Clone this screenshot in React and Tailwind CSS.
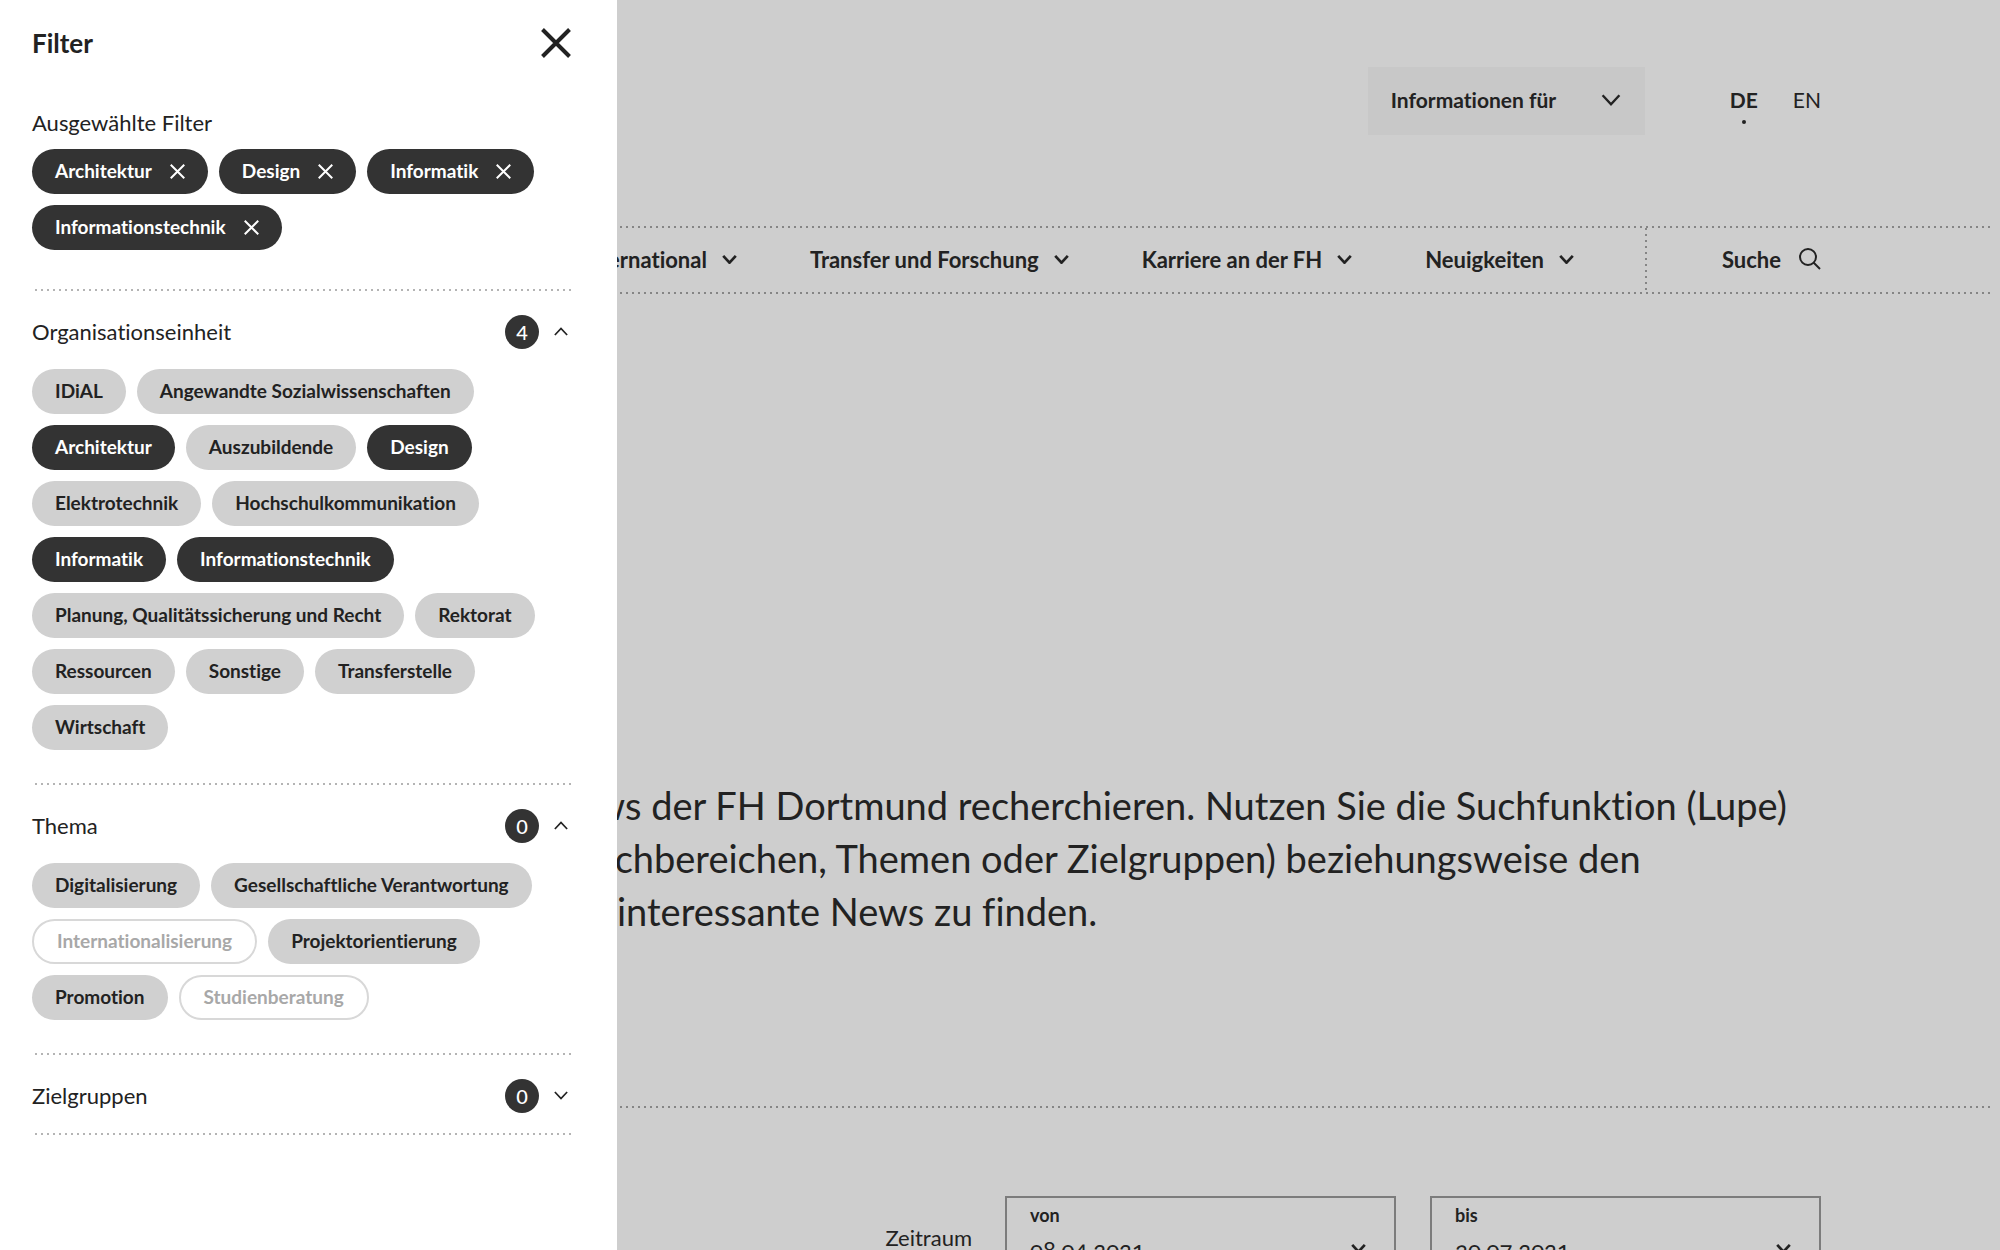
import { useState } from 'react';
import clsx from 'clsx';

const NAV = ['International', 'Transfer und Forschung', 'Karriere an der FH', 'Neuigkeiten'];

const GROUPS = [
  {
    id: 'org',
    title: 'Organisationseinheit',
    options: [
      'IDiAL', 'Angewandte Sozialwissenschaften', 'Architektur', 'Auszubildende', 'Design',
      'Elektrotechnik', 'Hochschulkommunikation', 'Informatik', 'Informationstechnik',
      'Planung, Qualitätssicherung und Recht', 'Rektorat', 'Ressourcen', 'Sonstige',
      'Transferstelle', 'Wirtschaft',
    ],
    disabled: [],
  },
  {
    id: 'thema',
    title: 'Thema',
    options: [
      'Digitalisierung', 'Gesellschaftliche Verantwortung', 'Internationalisierung',
      'Projektorientierung', 'Promotion', 'Studienberatung',
    ],
    disabled: ['Internationalisierung', 'Studienberatung'],
  },
  { id: 'ziel', title: 'Zielgruppen', options: [], disabled: [] },
];

function Chevron({ up, className, stroke = 2 }) {
  return (
    <svg viewBox="0 0 16 10" fill="none" stroke="currentColor" strokeWidth={stroke} className={className} aria-hidden="true">
      <path d={up ? 'M1 9 L8 1.5 L15 9' : 'M1 1 L8 8.5 L15 1'} />
    </svg>
  );
}

function Cross({ className, stroke }) {
  return (
    <svg viewBox="0 0 30 30" fill="none" stroke="currentColor" strokeWidth={stroke} className={className} aria-hidden="true">
      <path d="M1.5 1.5 L28.5 28.5 M28.5 1.5 L1.5 28.5" />
    </svg>
  );
}

function DottedLine({ dark }) {
  return (
    <div
      className={clsx(
        'h-[2px] bg-[length:6px_2px] bg-right bg-repeat-x',
        dark
          ? 'bg-[linear-gradient(270deg,#858585_2px,transparent_2px)]'
          : 'bg-[linear-gradient(270deg,#b4b4b4_2px,transparent_2px)]'
      )}
    />
  );
}

function Pill({ label, active, disabled, onClick }) {
  return (
    <button
      type="button"
      disabled={disabled}
      aria-pressed={active}
      onClick={onClick}
      className={clsx(
        'h-[45px] rounded-full px-[23px] pb-px text-[19px] font-bold',
        disabled && 'border-2 border-[#d8d8d8] bg-white text-[#a8a8a8]',
        !disabled && active && 'bg-[#333] text-white',
        !disabled && !active && 'bg-[#d0d0d0] text-[#222]'
      )}
    >
      {label}
    </button>
  );
}

function FilterGroup({ group, selected, open, onToggleOpen, onToggle }) {
  const count = group.options.filter(o => selected.includes(o)).length;
  return (
    <section>
      <h3>
        <button
          type="button"
          aria-expanded={open}
          onClick={onToggleOpen}
          className="flex h-[78px] w-full items-center pt-[3px] pr-[3px] text-[22px]"
        >
          <span className="flex-1 text-left">{group.title}</span>
          <span className="flex size-[34px] items-center justify-center rounded-full bg-[#333] text-[20px] font-medium text-white">
            {count}
          </span>
          <Chevron up={open} stroke={2} className="ml-[15px] h-[9px] w-[14px]" />
        </button>
      </h3>
      {open && (
        <div className="flex flex-wrap gap-[11px] pb-[33px]">
          {group.options.map(o => (
            <Pill
              key={o}
              label={o}
              active={selected.includes(o)}
              disabled={group.disabled.includes(o)}
              onClick={() => onToggle(o)}
            />
          ))}
        </div>
      )}
      <DottedLine />
    </section>
  );
}

function FilterDrawer() {
  const [selected, setSelected] = useState(['Architektur', 'Design', 'Informatik', 'Informationstechnik']);
  const [open, setOpen] = useState(['org', 'thema']);

  const flip = (list, v) => (list.includes(v) ? list.filter(x => x !== v) : [...list, v]);

  return (
    <aside className="fixed inset-y-0 left-0 w-[617px] overflow-y-auto bg-white pr-[46px] pl-8">
      <div className="flex h-[86px] items-center justify-between">
        <h2 className="text-[26px] font-bold">Filter</h2>
        <button type="button" aria-label="Schließen">
          <Cross stroke={4} className="size-[30px]" />
        </button>
      </div>

      <p className="mt-5 text-[22px] leading-[34px]">Ausgewählte Filter</p>
      <div className="mt-[9px] flex flex-wrap gap-[11px] pb-[39px]">
        {selected.map(s => (
          <button
            key={s}
            type="button"
            onClick={() => setSelected(flip(selected, s))}
            className="flex h-[45px] items-center gap-[18px] rounded-full bg-[#333] px-[23px] pb-px text-[19px] font-bold text-white"
          >
            {s}
            <Cross stroke={4} className="size-[15px]" />
          </button>
        ))}
      </div>
      <DottedLine />

      {GROUPS.map(g => (
        <FilterGroup
          key={g.id}
          group={g}
          selected={selected}
          open={open.includes(g.id)}
          onToggleOpen={() => setOpen(flip(open, g.id))}
          onToggle={o => setSelected(flip(selected, o))}
        />
      ))}
    </aside>
  );
}

function DateField({ id, label, value }) {
  return (
    <div className="flex h-[76px] w-[391px] items-start border-2 border-[#7c7c7c] pr-[28px] pl-[23px]">
      <div className="flex-1">
        <label htmlFor={id} className="block pt-[4px] text-[18px] leading-[26px] font-bold">{label}</label>
        <input
          id={id}
          type="text"
          defaultValue={value}
          className="mt-[4px] block w-full bg-transparent text-[24px] leading-[34px] oldstyle-nums outline-none"
        />
      </div>
      <Chevron stroke={3} className="mt-[46px] h-[9px] w-[15px]" />
    </div>
  );
}

export default function App() {
  return (
    <div className="h-screen overflow-hidden bg-[#cecece] font-[Lato,'Open_Sans',sans-serif] text-[#222] [font-feature-settings:'liga'_0]">
      <header>
        <div className="flex items-center justify-end pt-[67px] pr-[179px] pb-[91px]">
          <button type="button" className="flex h-[68px] w-[277px] items-center justify-between bg-[#c8c8c8] pr-[24px] pb-[2px] pl-[23px] text-[21px] font-bold">
            Informationen für
            <Chevron stroke={2} className="h-[12px] w-[20px]" />
          </button>
          <div className="ml-[85px] flex gap-[35px] pb-[2px] text-[21px]">
            <a href="#de" className="relative font-bold">
              DE
              <span className="absolute -bottom-[8px] left-1/2 size-[4px] -translate-x-1/2 rounded-full bg-[#222]" />
            </a>
            <a href="#en">EN</a>
          </div>
        </div>

        <div className="pr-[10px]">
          <DottedLine dark />
          <div className="flex h-[64px] text-[22px] font-bold">
            <nav className="flex flex-1 items-center justify-end gap-[73px] pr-[71px] pb-[2px]">
              {NAV.map(n => (
                <button key={n} type="button" className="flex items-center gap-[15px] whitespace-nowrap">
                  {n}
                  <Chevron stroke={3} className="h-[9px] w-[15px]" />
                </button>
              ))}
            </nav>
            <div className="w-[2px] bg-[linear-gradient(180deg,#858585_2px,transparent_2px)] bg-[length:2px_6px] bg-repeat-y" />
            <div className="flex w-[343px] items-center justify-end pr-[169px] pb-[2px]">
              <button type="button" className="flex items-center gap-[18px]">
                Suche
                <svg viewBox="0 0 22 22" fill="none" stroke="currentColor" strokeWidth="2" className="size-[22px]" aria-hidden="true">
                  <circle cx="9" cy="9" r="8" />
                  <path d="M14.5 14.5 L21 21" />
                </svg>
              </button>
            </div>
          </div>
          <DottedLine dark />
        </div>
      </header>

      <main>
        <p className="pt-[485px] pb-[168px] pl-[617px] text-[38px] leading-[53px] whitespace-nowrap">
          <span className="-ml-[70px] block">News der FH Dortmund recherchieren. Nutzen Sie die Suchfunktion (Lupe)</span>
          <span className="-ml-[40px] block">Fachbereichen, Themen oder Zielgruppen) beziehungsweise den</span>
          <span className="block">interessante News zu finden.</span>
        </p>
        <div className="pr-[10px]">
          <DottedLine dark />
        </div>
        <form className="flex justify-end pt-[88px] pr-[179px]">
          <span className="mt-[25px] mr-[33px] text-[22px] leading-[34px]">Zeitraum</span>
          <div className="flex gap-[34px]">
            <DateField id="von" label="von" value="08.04.2021" />
            <DateField id="bis" label="bis" value="30.07.2021" />
          </div>
        </form>
      </main>

      <FilterDrawer />
    </div>
  );
}
